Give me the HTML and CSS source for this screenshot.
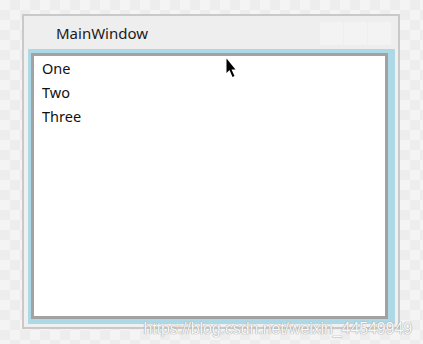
FILE: index.html
```html
<!DOCTYPE html>
<html>
<head>
  <title>MainWindow</title>
  <link rel="stylesheet" href="styles.css">
</head>
<body>
  <div class="window">
    <div class="title-bar">
      <span class="title">MainWindow</span>
      <div class="title-buttons">
        <span class="title-btn"></span>
        <span class="title-btn"></span>
        <span class="title-btn"></span>
      </div>
    </div>
    <div class="focus-frame">
      <ul class="list">
        <li>One</li>
        <li>Two</li>
        <li>Three</li>
      </ul>
    </div>
  </div>

  <svg class="cursor" width="12" height="22" viewBox="0 0 12 22">
    <path d="M0.5 0.5 L0.5 15 L3.5 12 L6.5 19 L8.5 18 L5.5 11.5 L9.5 11.5 Z" fill="#000"/>
  </svg>

  <div class="watermark">https://blog.csdn.net/weixin_44549949</div>
</body>
</html>
```

FILE: styles.css
```css
body {
  margin: 0;
  width: 423px;
  height: 344px;
  position: relative;
  overflow: hidden;
  font-family: "Noto Sans", "Open Sans", sans-serif;
  background-color: #f4f4f4;
  background-image:
    linear-gradient(45deg, #ededed 25%, transparent 25%, transparent 75%, #ededed 75%),
    linear-gradient(45deg, #ededed 25%, transparent 25%, transparent 75%, #ededed 75%);
  background-size: 20px 20px;
  background-position: 0 0, 10px 10px;
}

.window {
  box-sizing: border-box;
  width: 378px;
  height: 315px;
  margin: 14px 0 0 22px;
  border: 2px solid #c9c9c9;
  background: #f0f0f0;
  display: flex;
  flex-direction: column;
}

.title-bar {
  height: 33px;
  display: flex;
  align-items: flex-start;
  justify-content: space-between;
  background: #eeeeee;
}

.title {
  padding: 7px 0 0 32px;
  font-size: 15px;
  line-height: 20px;
  color: #1b1b1b;
}

.title-buttons {
  display: flex;
  gap: 1px;
  margin: 6px 7px 0 0;
}

.title-btn {
  width: 23px;
  height: 23px;
  background: #f3f3f3;
}

.focus-frame {
  flex: 1;
  margin: 0 3px 3px 4px;
  padding: 4px 7px 5px 3px;
  background: #add8e6;
  display: flex;
}

.list {
  flex: 1;
  margin: 0;
  padding: 0 0 0 8px;
  list-style: none;
  background: #fff;
  border: 3px solid #a2a2a2;
}

.list li {
  font-size: 14.5px;
  line-height: 24px;
  color: #111;
}

.cursor {
  position: absolute;
  left: 226px;
  top: 58px;
}

.watermark {
  position: absolute;
  right: 11px;
  bottom: 6px;
  font-family: "Liberation Sans", Arial, sans-serif;
  font-size: 16px;
  color: rgba(255, 255, 255, 0.95);
  text-shadow: 0 0 1px #9a9a9a, 0 0 1px #9a9a9a;
  letter-spacing: -0.1px;
}
```
